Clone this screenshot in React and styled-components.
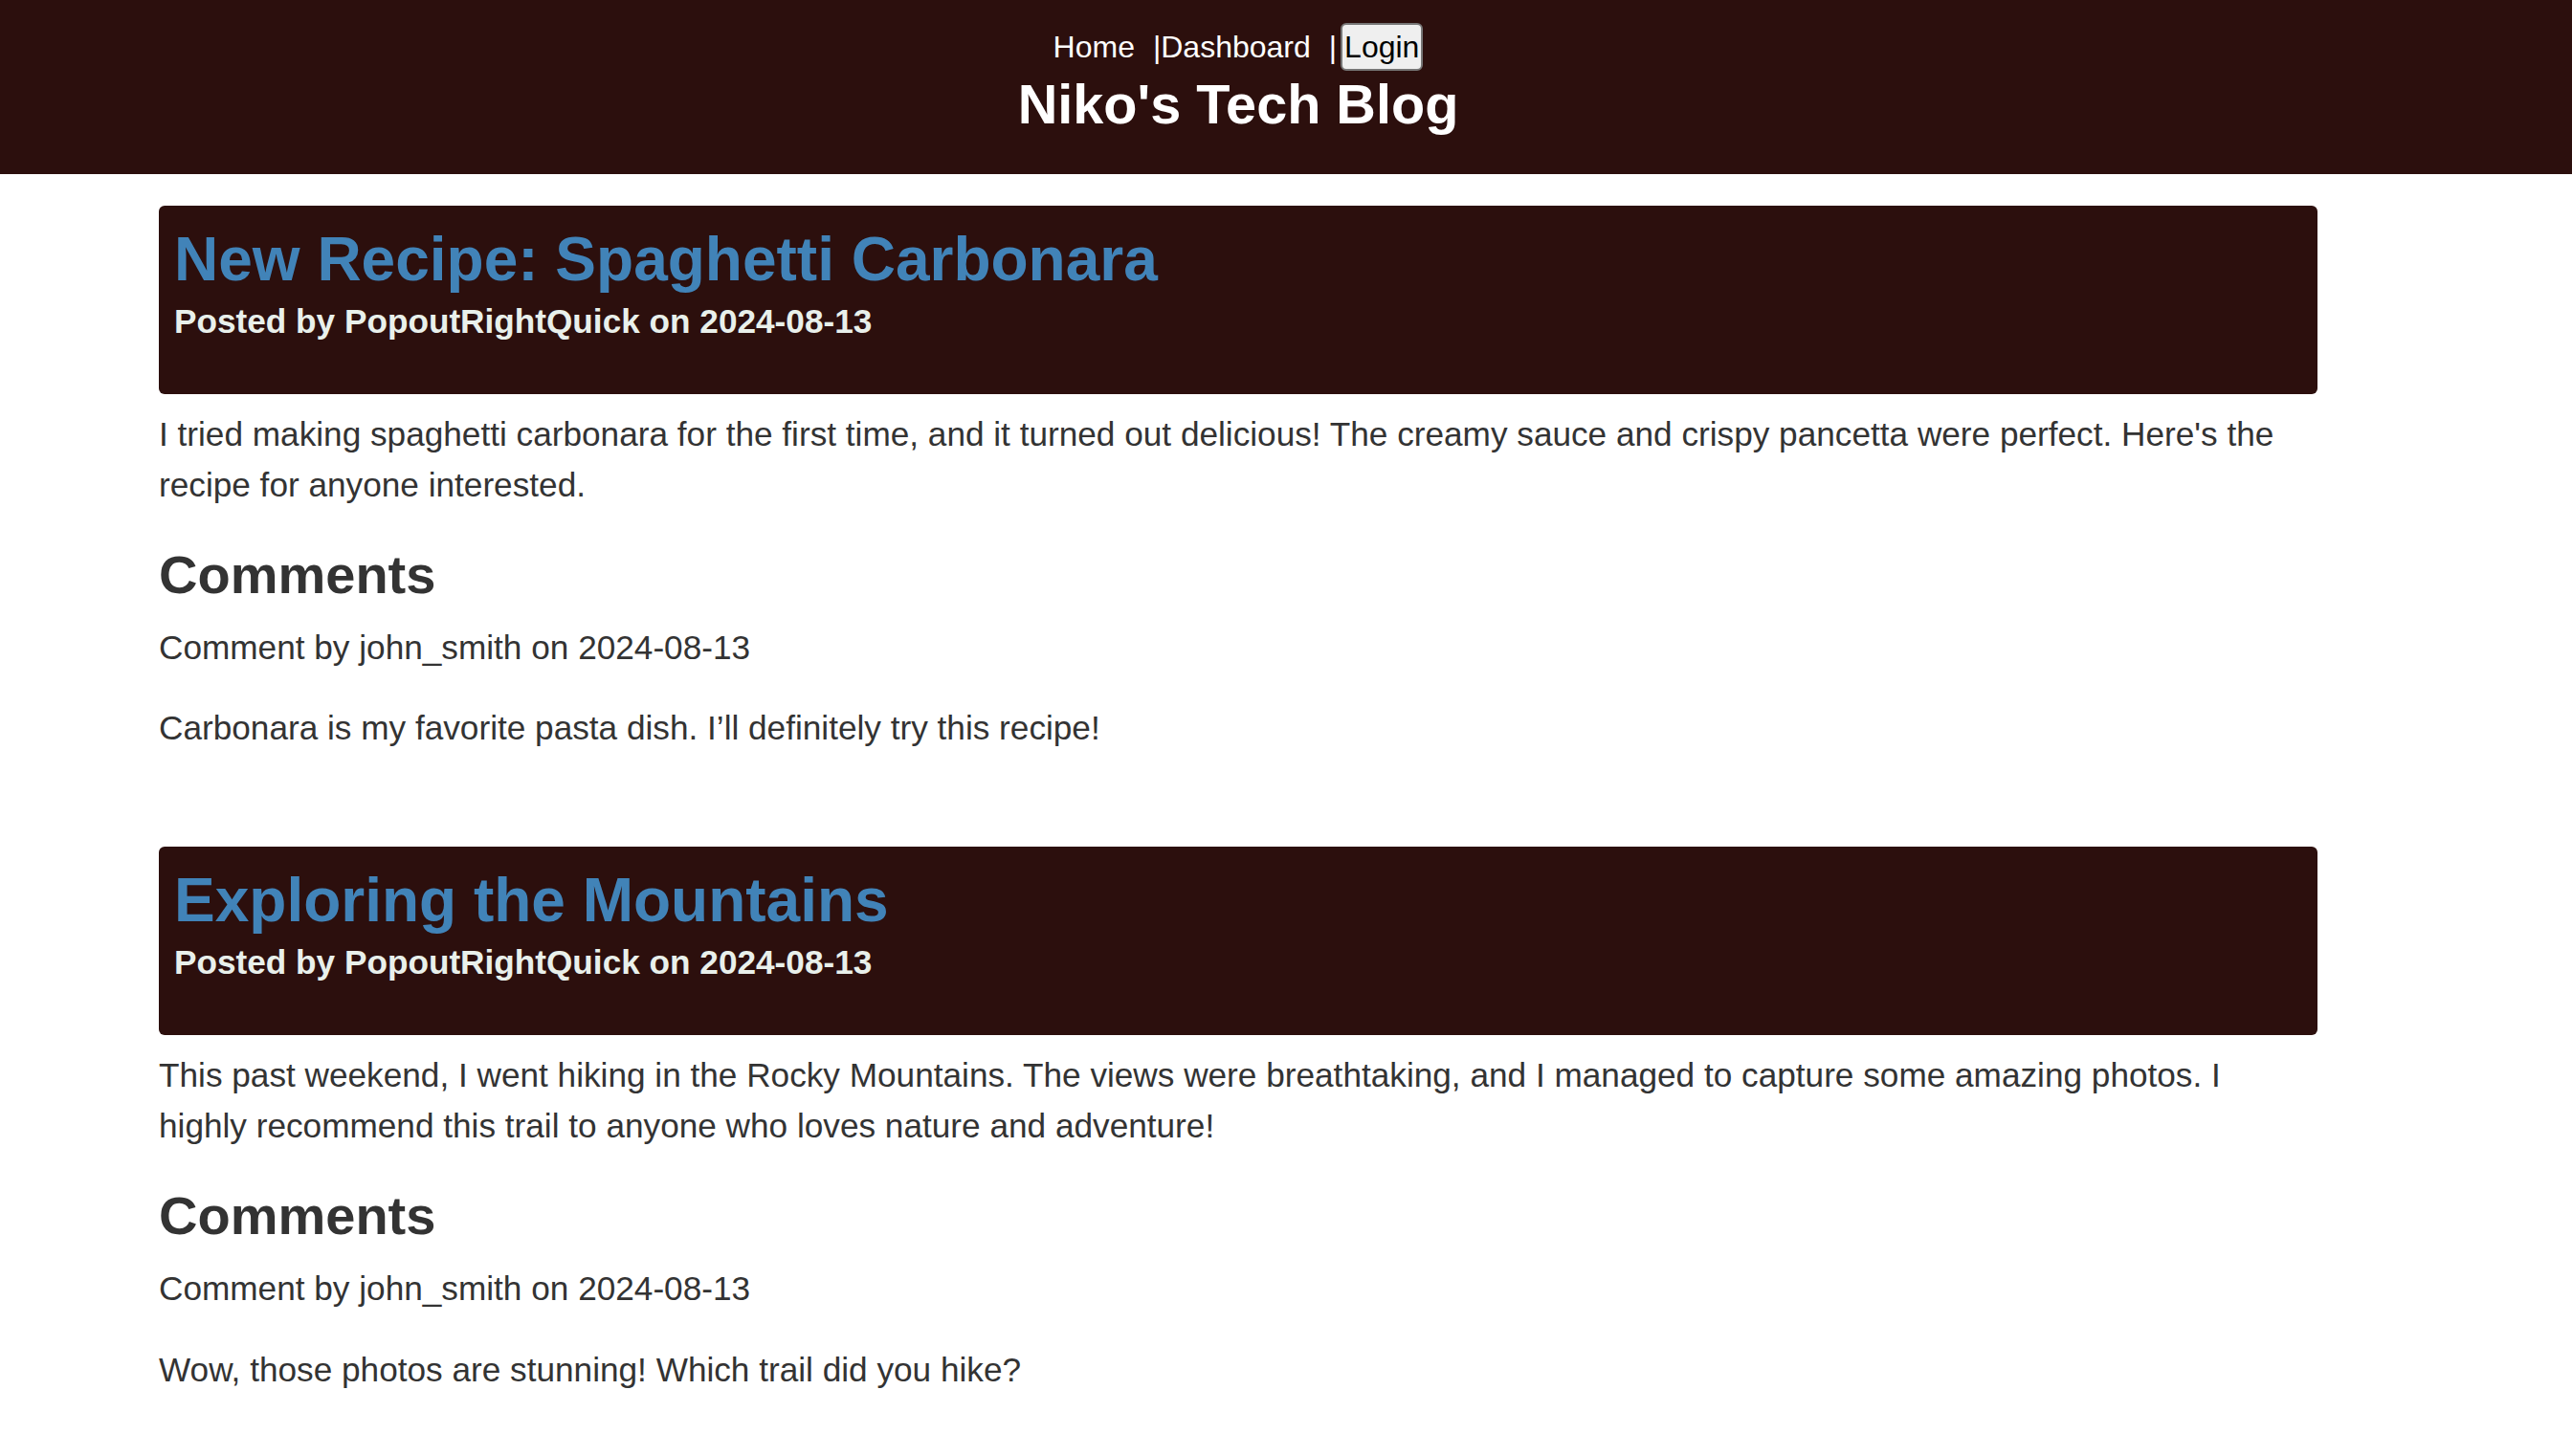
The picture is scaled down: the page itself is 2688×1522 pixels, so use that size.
import React from 'react';
import styled, { createGlobalStyle } from 'styled-components';

const GlobalStyle = createGlobalStyle`
  html, body {
    margin: 0;
    padding: 0;
    background: #fff;
    font-family: "Liberation Sans", Arial, Helvetica, sans-serif;
    color: #333;
  }
`

const Header = styled.header`
  background-color: #2c0f0d;
  padding: 24px 100px 40px 0;
  display: flex;
  flex-direction: column;
  align-items: center;
`
const Nav = styled.nav`
  display: flex;
  align-items: center;
  height: 50px;
  font-size: 32px;
  color: #fff;
`
const NavLink = styled.a`
  color: #fff;
  text-decoration: none;
  margin-right: 19px;
  cursor: pointer;
`
const Sep = styled.span`
  color: #fff;
`
const LoginButton = styled.button`
  margin-left: 4px;
  height: 50px;
  padding: 0 2px;
  font-family: inherit;
  font-size: 32px;
  color: #000;
  background: #efefef;
  border: 2px solid #767676;
  border-radius: 6px;
`
const SiteTitle = styled.h1`
  margin: 2px 0 0;
  font-size: 57.6px;
  line-height: 66px;
  font-weight: bold;
  color: #fff;
`

const Main = styled.main`
  padding: 33px 266px 0 166px;
`
const PostBox = styled.article`
  margin-bottom: 97px;
`
const PostHead = styled.div`
  background-color: #2c0f0d;
  border-radius: 6px;
  padding: 19px 16px 56px;
`
const PostTitle = styled.h2`
  margin: 0;
  font-size: 64px;
  line-height: 74px;
  font-weight: bold;
  color: #4183b8;
`
const PostMeta = styled.p`
  margin: 8px 0 0;
  font-size: 35.2px;
  line-height: 40px;
  font-weight: bold;
  color: #e9f0eb;
`
const Text = styled.p`
  margin: ${p => p.gap || 0}px 0 0;
  font-size: 35.2px;
  line-height: 52.8px;
  color: #333;
`
const CommentsTitle = styled.h3`
  margin: 33px 0 0;
  font-size: 56px;
  line-height: 67px;
  font-weight: bold;
  color: #333;
`

const posts = [
  {
    title: 'New Recipe: Spaghetti Carbonara',
    author: 'PopoutRightQuick',
    date: '2024-08-13',
    body: "I tried making spaghetti carbonara for the first time, and it turned out delicious! The creamy sauce and crispy pancetta were perfect. Here's the recipe for anyone interested.",
    comments: [
      { user: 'john_smith', date: '2024-08-13', text: 'Carbonara is my favorite pasta dish. I\u2019ll definitely try this recipe!' }
    ]
  },
  {
    title: 'Exploring the Mountains',
    author: 'PopoutRightQuick',
    date: '2024-08-13',
    body: 'This past weekend, I went hiking in the Rocky Mountains. The views were breathtaking, and I managed to capture some amazing photos. I highly recommend this trail to anyone who loves nature and adventure!',
    comments: [
      { user: 'john_smith', date: '2024-08-13', text: 'Wow, those photos are stunning! Which trail did you hike?' }
    ]
  }
]

const Post = ({ post }) => (
  <PostBox>
    <PostHead>
      <PostTitle>{post.title}</PostTitle>
      <PostMeta>Posted by {post.author} on {post.date}</PostMeta>
    </PostHead>
    <Text gap={16}>{post.body}</Text>
    <CommentsTitle>Comments</CommentsTitle>
    {post.comments.map((c, i) => (
      <div key={i}>
        <Text gap={17}>Comment by {c.user} on {c.date}</Text>
        <Text gap={32}>{c.text}</Text>
      </div>
    ))}
  </PostBox>
)

export default function App() {
  return (
    <>
      <GlobalStyle />
      <Header>
        <Nav>
          <NavLink>Home</NavLink>
          <Sep>|</Sep>
          <NavLink>Dashboard</NavLink>
          <Sep>|</Sep>
          <LoginButton>Login</LoginButton>
        </Nav>
        <SiteTitle>Niko's Tech Blog</SiteTitle>
      </Header>
      <Main>
        {posts.map((p, i) => <Post key={i} post={p} />)}
      </Main>
    </>
  )
}
